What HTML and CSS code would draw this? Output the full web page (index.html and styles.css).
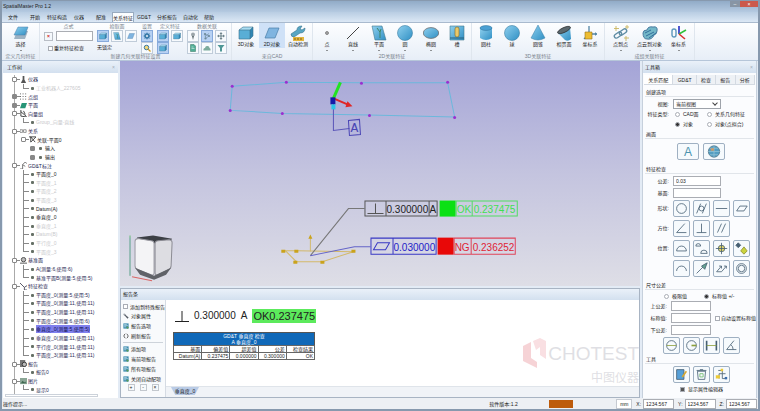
FILE: index.html
```
<!DOCTYPE html>
<html lang="zh-CN">

<head>
  <meta charset="UTF-8">
  <title>SpatialMaster Pro 1.2</title>
  <link rel="stylesheet" href="styles.css">
</head>

<body>
  <svg class="defs" aria-hidden="true">
    <defs>
      <linearGradient id="blue" x1="0" y1="0" x2="1" y2="1">
        <stop offset="0" stop-color="#8fd0ee" />
        <stop offset="1" stop-color="#2f8fc4" />
      </linearGradient>
    </defs>
    <symbol id="plane" viewBox="0 0 16 16"><path d="M4 6h11l-3 8H1z" fill="#9db3c4" /><path d="M5 2h10l-3 8H1z" fill="url(#blue)" stroke="#4a7ea8" stroke-width=".5" /></symbol>
    <symbol id="sheet" viewBox="0 0 16 16"><path d="M5 3h10l-4 10H1z" fill="#7fb4e0" stroke="#4a7ea8" stroke-width=".7" /></symbol>
    <symbol id="cube" viewBox="0 0 16 16"><path d="M1 5l4-3h10l-3 3z" fill="#a9ddf2" /><path d="M1 5h11v9H1z" fill="#59aed6" /><path d="M12 5l3-3v9l-3 3z" fill="#2f86b4" /><path d="M1 5l4-3h10v9l-3 3H1zh11v9M12 5l3-3" fill="none" stroke="#3b6e8c" stroke-width=".6" /></symbol>
    <symbol id="wrench" viewBox="0 0 16 16"><path d="M1 9l6-4q0-4 5-4l-2 3 2 1 3-2q0 5-5 5l-6 4q-3 0-3-3z" fill="#57a6c4" stroke="#33708c" stroke-width=".6" /><path d="M3 12h11v4H3z" fill="#e3b53c" /><path d="M4 14h9" stroke="#7c5f16" stroke-dasharray="2 1" /></symbol>
    <symbol id="spanner" viewBox="0 0 16 16"><path d="M2 1q-2 5 3 6l7 8 3-3-8-7q0-4-5-4l3 3-1 1z" fill="#555c66" /></symbol>
    <symbol id="dot" viewBox="0 0 16 16"><circle cx="8" cy="8" r="1.5" fill="#aaa" stroke="#555" stroke-width=".6" /></symbol>
    <symbol id="line" viewBox="0 0 16 16"><path d="M2 14L14 2" stroke="#444" /></symbol>
    <symbol id="face" viewBox="0 0 16 16"><path d="M1 1h10l4 14H4z" fill="url(#blue)" stroke="#44788f" stroke-width=".6" /><path d="M6 3l3 4 1-3M9 7v6" stroke="#3e8566" fill="none" /></symbol>
    <symbol id="circle" viewBox="0 0 16 16"><circle cx="8" cy="8" r="7.5" fill="url(#blue)" stroke="#3d7fa4" stroke-width=".6" /></symbol>
    <symbol id="ellipse" viewBox="0 0 16 16"><ellipse cx="8" cy="8" rx="7.7" ry="5.4" fill="url(#blue)" stroke="#6b6f72" stroke-width=".8" /></symbol>
    <symbol id="slot" viewBox="0 0 16 16"><path d="M1 1h14v14H1z" fill="url(#blue)" stroke="#44788f" stroke-width=".6" /><rect x="6" y="2" width="4" height="10" rx="2" fill="#e8c96b" stroke="#8a6a1d" stroke-width=".6" /><path d="M1 13h14" stroke="#27607d" /></symbol>
    <symbol id="cylinder" viewBox="0 0 16 16"><path d="M2 3v10q6 4 12 0V3z" fill="url(#blue)" /><ellipse cx="8" cy="3" rx="6" ry="2.400" fill="#4ba0d3" stroke="#2d6c94" stroke-width=".5" /></symbol>
    <symbol id="cone" viewBox="0 0 16 16"><path d="M8 0l7 13q-7 4-14 0z" fill="url(#blue)" stroke="#3d7fa4" stroke-width=".5" /></symbol>
    <symbol id="cut" viewBox="0 0 16 16"><path d="M2 8l12-6 1 12q-3 3-6 1z" fill="url(#blue)" /><ellipse cx="8" cy="5" rx="7" ry="2.4" transform="rotate(-25 8 5)" fill="#5b686e" stroke="#222" stroke-width=".6" /></symbol>
    <symbol id="axes" viewBox="0 0 16 16"><path d="M7 1v8h8M7 9l-5 5" fill="none" stroke="#5486a5" stroke-width="1.3" /><path d="M3 7h7v7H3z" fill="#edbd32" stroke="#98721a" stroke-width=".6" /><path d="M15 9l-2-2v4z" fill="#5486a5" /></symbol>
    <symbol id="link" viewBox="0 0 16 16"><rect x="1" y="8" width="8" height="4" rx="2" transform="rotate(-35 5 10)" fill="none" stroke="#5e8ca3" stroke-width="1.4" /><rect x="6" y="5" width="8" height="4" rx="2" transform="rotate(-35 10 7)" fill="none" stroke="#5e8ca3" stroke-width="1.4" /><path d="M3 1v5M1 3.500h5M14 0v4M12 2h4M13 11v5M11 13h5" stroke="#c9b660" stroke-width=".9" /></symbol>
    <symbol id="cloud" viewBox="0 0 16 16"><path d="M1 8q0-3 4-3 1-4 6-3 5-1 4 4 0 3-3 4-2 5-7 4-4 0-4-6z" fill="#73b7c8" stroke="#4a7ba0" /><path d="M3 8l6-3M4 11l8-4M7 13l7-5" stroke="#336f9c" /></symbol>
    <symbol id="csys" viewBox="0 0 16 16"><rect x="1" y="4" width="4" height="8" rx="2" fill="none" stroke="#5c97bb" stroke-width="1.4" /><path d="M8 9V1" stroke="#232bc4" stroke-width="1.600" /><path d="M8 9l7-4" stroke="#2fc13a" stroke-width="1.600" /><path d="M8 9l6 5" stroke="#d82f2f" stroke-width="1.600" /></symbol>
    <symbol id="gear" viewBox="0 0 16 16"><circle cx="8" cy="8" r="4" fill="none" stroke="#3477a6" stroke-width="3" /><path d="M8 1v14M1 8h14M3 3l10 10M13 3L3 13" stroke="#3477a6" stroke-width="1.500" /><circle cx="8" cy="8" r="2" fill="#e5edf7" /></symbol>
    <symbol id="search" viewBox="0 0 16 16"><circle cx="7" cy="7" r="4.500" fill="#f3d778" stroke="#3477a6" stroke-width="2" /><path d="M10 10l5 5" stroke="#d09a23" stroke-width="2.500" /></symbol>
    <symbol id="pin" viewBox="0 0 16 16"><circle cx="8" cy="5" r="4" fill="#9ba5aa" /><path d="M6 8h4l-2 8z" fill="#5f6b70" /></symbol>
    <symbol id="nodes" viewBox="0 0 16 16"><path d="M4 4l8 4-7 5M4 4l1 9M12 3l-8 6" stroke="#59768c" fill="none" /><circle cx="4" cy="4" r="2.200" fill="#6d8a99" /><circle cx="12" cy="8" r="2.200" fill="#6d8a99" /><circle cx="5" cy="13" r="2.200" fill="#6d8a99" /></symbol>
    <symbol id="move" viewBox="0 0 16 16"><path d="M8 0l3 4H9v3h3V5l4 3-4 3V9H9v3h2l-3 4-3-4h2V9H4v2L0 8l4-3v2h3V4H5z" fill="#6a8088" /></symbol>
    <symbol id="doc" viewBox="0 0 16 16"><path d="M3 1h7l3 3v11H3z" fill="#4fae96" stroke="#35725f" /><path d="M5 6h4M5 9h6" stroke="#fff" /></symbol>
    <symbol id="smallcloud" viewBox="0 0 16 16"><path d="M1 13q-1-5 3-5 1-5 5-4 4 0 4 4 3 0 2 5z" fill="#7cab9d" /></symbol>
    <symbol id="funnel" viewBox="0 0 16 16"><path d="M1 2h14l-5 6v7H6V8z" fill="#4f9796" /></symbol>
    <symbol id="pic" viewBox="0 0 16 16"><path d="M1 1h14v14H1z" fill="#418db0" /><path d="M3 4h7M3 7h10M3 10h5" stroke="#d8eef5" stroke-width="1.500" /><circle cx="12" cy="12" r="3" fill="#5c9a58" /></symbol>
    <symbol id="refresh" viewBox="0 0 16 16"><path d="M6 2Q1 5 3 10l3 4M10 14q5-3 3-8l-3-4" fill="none" stroke="#333" stroke-width="2" /></symbol>
  </svg>

  <div class="app">
    <header class="titlebar">
      <span>SpatialMaster Pro 1.2</span>
      <div class="window-buttons"><button aria-label="最小化">–</button><button class="close" aria-label="关闭">×</button></div>
    </header>

    <nav class="menu">
      <button class="wide">文件</button><button class="wide">开始</button><button class="tight">特征构造</button><button class="wide">仪器</button><button class="wide">配准</button><button class="active">关系特征</button><button>GD&amp;T</button><button>分析报告</button><button>自动化</button><button>帮助</button>
    </nav>

    <div class="ribbon">
      <section class="group define">
        <div class="tools"><button class="tool"><svg><use href="#plane" /></svg>选择<i></i></button></div>
        <h2>定义几何特征</h2>
      </section>
      <section class="group settings">
        <div class="tools">
          <div class="sub point">
            <h3>点式</h3>
            <div class="name-row"><button class="clear" aria-label="清除">×</button><input type="text" aria-label="名称"></div>
            <label><input type="checkbox">重复特征检查</label>
          </div>
          <div class="sub pick">
            <h3>拾取面</h3>
            <div class="mini three"><button class="on"><svg><use href="#cube" /></svg></button><button><svg><use href="#face" /></svg></button><button><svg><use href="#sheet" /></svg></button></div>
            <span>无锁定</span>
          </div>
          <div class="sub">
            <h3>设置</h3>
            <div class="mini"><button class="on"><svg><use href="#gear" /></svg></button><button><svg><use href="#search" /></svg></button></div>
          </div>
          <div class="sub">
            <h3>定义特征</h3>
            <div class="mini two"><button class="on"><svg><use href="#cube" /></svg></button><button><svg><use href="#cube" /></svg></button><button class="on"><svg><use href="#cube" /></svg></button></div>
          </div>
          <div class="sub">
            <h3>数据关联</h3>
            <div class="mini three"><button><svg><use href="#pin" /></svg></button><button class="on"><svg><use href="#nodes" /></svg></button><button><svg><use href="#move" /></svg></button><button><svg><use href="#doc" /></svg></button><button><svg><use href="#smallcloud" /></svg></button><button><svg><use href="#funnel" /></svg></button></div>
          </div>
        </div>
        <h2>新建几何关联特征设置</h2>
      </section>
      <section class="group">
        <div class="tools">
          <button class="tool"><svg><use href="#cube" /></svg>3D对象</button>
          <button class="tool on"><svg><use href="#sheet" /></svg>2D对象</button>
          <button class="tool"><svg><use href="#wrench" /></svg>自动检测</button>
        </div>
        <h2>来自CAD</h2>
      </section>
      <section class="group">
        <div class="tools">
          <button class="tool"><svg><use href="#dot" /></svg>点<i></i></button>
          <button class="tool"><svg><use href="#line" /></svg>直线<i></i></button>
          <button class="tool"><svg><use href="#face" /></svg>平面<i></i></button>
          <button class="tool"><svg><use href="#circle" /></svg>圆<i></i></button>
          <button class="tool"><svg><use href="#ellipse" /></svg>椭圆<i></i></button>
          <button class="tool"><svg><use href="#slot" /></svg>槽</button>
        </div>
        <h2>2D关联特征</h2>
      </section>
      <section class="group">
        <div class="tools">
          <button class="tool"><svg><use href="#cylinder" /></svg>圆柱</button>
          <button class="tool"><svg><use href="#circle" /></svg>球</button>
          <button class="tool"><svg><use href="#cone" /></svg>圆锥</button>
          <button class="tool"><svg><use href="#cut" /></svg>相贯面</button>
          <button class="tool"><svg><use href="#axes" /></svg>坐标系</button>
        </div>
        <h2>3D关联特征</h2>
      </section>
      <section class="group spaced">
        <div class="tools">
          <button class="tool"><svg><use href="#link" /></svg>点到点<i></i></button>
          <button class="tool"><svg><use href="#cloud" /></svg>点云到对象<i></i></button>
          <button class="tool"><svg><use href="#csys" /></svg>坐标系<i></i></button>
        </div>
        <h2>成组关联特征</h2>
      </section>
    </div>

    <main class="workspace">
      <aside class="tree-panel">
        <h2 class="panel-title">工作树<span>×</span></h2>
        <ul class="tree">
          <li class="root"><svg viewBox="0 0 8 8"><path d="M3 0h2v4l2 4H1l2-4z" fill="#555" /></svg>仪器</li>
          <li class="leaf last off">工业机器人_227605</li>
          <li class="root shut"><svg viewBox="0 0 8 8"><path d="M0 1h8M0 4h8M0 7h8" stroke="#444" stroke-dasharray="1 2" /></svg>点组</li>
          <li class="root shut"><svg viewBox="0 0 8 8"><path d="M2 1h6L6 7H0z" fill="#279577" /></svg>平面</li>
          <li class="root"><svg viewBox="0 0 8 8"><path d="M1 0v7l7 1M1 2l6 5M4 1l2 4" fill="none" stroke="#333" /></svg>向量组</li>
          <li class="leaf last off">Group_向量-直线</li>
          <li class="root"><svg viewBox="0 0 8 8"><path d="M0 2h3v3H0zM4 2h3v3H4z" fill="none" stroke="#888" /></svg>关系</li>
          <li class="branch"><svg viewBox="0 0 8 8"><path d="M0 1h8L2 7V1l5 6" fill="none" stroke="#333" /></svg>关联-平面0</li>
          <li class="deep">输入</li>
          <li class="deep">输出</li>
          <li class="root"><svg viewBox="0 0 8 8"><path d="M0 8h3V3l3-3 2 2M3 3l3 2" fill="none" stroke="#666" /></svg>GD&amp;T标注</li>
          <li class="leaf">平面度_0</li>
          <li class="leaf off">平面度_1</li>
          <li class="leaf off">平面度_2</li>
          <li class="leaf off">平面度_3</li>
          <li class="leaf">Datum(A)</li>
          <li class="leaf">垂直度_0</li>
          <li class="leaf off">垂直度_1</li>
          <li class="leaf off">Datum(B)</li>
          <li class="leaf off">平行度_0</li>
          <li class="leaf last off">平面度_3</li>
          <li class="root"><svg viewBox="0 0 8 8"><circle cx="4" cy="3" r="2.500" fill="#bbb" stroke="#444" /><path d="M0 7h8" stroke="#444" /></svg>基准面</li>
          <li class="leaf used">A(测量:6,使用:6)</li>
          <li class="leaf last used">基准平面B(测量:5,使用:5)</li>
          <li class="root"><svg viewBox="0 0 8 8"><path d="M0 0l5 5v3h3M5 5l3-2" fill="none" stroke="#445" /></svg>特征检查</li>
          <li class="leaf used">平面度_0(测量:5,使用:5)</li>
          <li class="leaf used">平面度_0(测量:11,使用:11)</li>
          <li class="leaf used">平面度_1(测量:11,使用:11)</li>
          <li class="leaf used">平面度_2(测量:6,使用:6)</li>
          <li class="leaf used selected"><span>垂直度_0(测量:5,使用:5)</span></li>
          <li class="leaf used">垂直度_0(测量:11,使用:11)</li>
          <li class="leaf used">平行度_0(测量:11,使用:11)</li>
          <li class="leaf last used">平面度_3(测量:11,使用:11)</li>
          <li class="root"><svg viewBox="0 0 8 8"><path d="M0 0h6v8H0z" fill="#777" /><circle cx="5" cy="5" r="2.500" fill="#bbb" stroke="#333" /></svg>报告</li>
          <li class="leaf last used">报告0</li>
          <li class="root"><svg viewBox="0 0 8 8"><path d="M0 0h8v7H0z" fill="#8ba696" /><path d="M1 6l2-3 2 2 1-1 1 2" fill="#3e6950" /></svg>图片</li>
          <li class="leaf last used">显示0</li>
        </ul>
        <div class="hscroll"></div>
      </aside>

      <div class="center">
        <div class="view">
          <svg viewBox="121 62 519 224">
            <path d="M233 87l54-4 75 0.500h86l7 34-85-2-87-1.500-52-3z" fill="none" stroke="#6cb8dc" />
            <g fill="#9a2fd0">
              <circle cx="233" cy="87" r="1.500" /><circle cx="287" cy="83" r="1.500" /><circle cx="362" cy="84" r="1.500" /><circle cx="448" cy="83" r="1.500" />
              <circle cx="231" cy="111" r="1.500" /><circle cx="283" cy="114" r="1.500" /><circle cx="370" cy="116" r="1.500" /><circle cx="455" cy="118" r="1.500" />
            </g>
            <path d="M334 100v31l16-2" fill="none" stroke="#5a55b8" />
            <path d="M334 99l7-16" stroke="#22e322" stroke-width="3" />
            <path d="M334 99l14 6" stroke="#e02626" stroke-width="2" />
            <path d="M346 108l2-6 5 5z" fill="#e02626" />
            <path d="M331 98h5v7h-5z" fill="#161aa8" />
            <path d="M332 105h4v5h-4z" fill="#2cc4e6" />
            <path d="M349 121l11-1 1 15-11 1z" fill="none" stroke="#4a45b5" />
            <text class="datum" x="351" y="133">A</text>

            <path d="M284 251h14l56 1-31 10h-26l-11-11M311 238v14" fill="none" stroke="#d3b96b" />
            <g fill="#caa31c"><path d="M309 239l2-4 2 4zM282 250h4v3h-4zM295 250h4v3h-4zM352 250h4v3h-4zM294 261h4v3h-4zM321 261h4v3h-4z" /></g>
            <path d="M311 256l38-47h16" fill="none" stroke="#777" />
            <path d="M311 256l44-9h16" fill="none" stroke="#6464c8" />

            <g fill="none" stroke="#555">
              <path d="M365.500 201.500h72v15h-72zM386.500 201.500v15M429.500 201.500v15M368 214h16M376 204v10" />
            </g>
            <path d="M440 201h16v16h-16z" fill="#0be014" />
            <path d="M456.500 201.500h61v15h-61zM472.500 201.500v15" fill="none" stroke="#51dc63" />
            <text class="callout" x="387" y="213">0.300000</text>
            <text class="callout" x="430" y="213">A</text>
            <text class="callout ok" x="457" y="213">OK</text>
            <text class="callout ok" x="474" y="213">0.237475</text>

            <path d="M371.500 238.500h65v16h-65zM393.500 238.500v16M374 250l4-7h12l-4 7z" fill="none" stroke="#3838c4" />
            <path d="M438 238h16v17h-16z" fill="#e80808" />
            <path d="M454.500 238.500h61v16h-61zM471.500 238.500v16" fill="none" stroke="#e0455a" />
            <text class="callout info" x="394" y="251">0.030000</text>
            <text class="callout ng" x="455" y="251">NG</text>
            <text class="callout ng" x="473" y="251">0.236252</text>

            <path d="M131 236v40" stroke="#65be71" /><path d="M133 277l20 4" stroke="#d96565" /><path d="M131 276v-38" stroke="#8490d8" stroke-width=".5" />
            <path d="M138 238l16-2 19 3-4 5-31-1z" fill="#3c3f45" />
            <path d="M136 242q0-3 3-3l13 2q3 0 3 3v29q0 3-3 2l-13-5q-3-1-3-4z" fill="#f4f4f6" stroke="#9a9aa2" />
            <path d="M156 244q0-3 3-3l11-1q3 0 3 3l-1 23q0 3-3 4l-10 5q-3 1-3-2z" fill="#dddde2" stroke="#8c8c94" />
            <path d="M136 268l19 8 17-8-5 7-12 5-14-5z" fill="#606268" />
          </svg>
        </div>

        <section class="report">
          <h2 class="panel-title">报告条</h2>
          <div class="report-main">
            <div class="report-menu">
              <label><input type="checkbox">添加到特殊报告</label>
              <button><svg><use href="#spanner" /></svg>对象属性</button>
              <button><svg><use href="#pic" /></svg>报告选项</button>
              <button><svg><use href="#refresh" /></svg>刷新报告</button>
              <hr>
              <button><svg><use href="#pic" /></svg>添加项</button>
              <button><svg><use href="#pic" /></svg>当前项报告</button>
              <button><svg><use href="#pic" /></svg>所有项报告</button>
              <button><svg><use href="#pic" /></svg>关闭自动配项</button>
              <div class="steps"><button>+</button><button>-</button><button>×</button></div>
            </div>
            <div class="report-page">
              <div class="sheet">
                <p class="result"><svg viewBox="0 0 14 11"><path d="M0 10.500h14M7 0v10" stroke="#222" /></svg><span>0.300000</span><span>A</span><strong>OK0.237475</strong></p>
                <table>
                  <caption>GD&amp;T 垂直度 检查<br>A 垂直度_0</caption>
                  <tr><th>基面</th><th>偏差值</th><th>超差值</th><th>公差</th><th>检查结果</th></tr>
                  <tr><td>Datum(A)</td><td>0.237475</td><td>0.000000</td><td>0.300000</td><td>OK</td></tr>
                </table>
                <div class="watermark">
                  <svg viewBox="0 0 24 32"><path d="M0 8l8-4v16l6 4v6L0 23z" fill="#f6d3d6" /><path d="M10 3l7-3 6 3v18l-6-4V9l-4 3z" fill="#f9dfe2" /></svg>
                  <b>CHOTEST</b>
                  <span>中图仪器</span>
                </div>
              </div>
              <div class="page-tabs"><button>垂直度_0</button></div>
            </div>
          </div>
        </section>
      </div>

      <aside class="toolbox">
        <h2 class="panel-title">工具箱<span>×</span></h2>
        <nav class="tool-tabs"><button class="active">关系匹配</button><button>GD&amp;T</button><button>检查</button><button>报告</button><button>分析</button></nav>
        <h3>创建选项</h3>
        <div class="row"><label for="view">视图:</label><div class="select"><select id="view"><option>当前视图</option></select></div></div>
        <div class="row"><span>特征类型:</span><div class="radios"><label><input type="radio" name="type">CAD面</label><label><input type="radio" name="type">关系几何特征</label></div></div>
        <div class="row"><span></span><div class="radios"><label><input type="radio" name="type" checked>对象</label><label><input type="radio" name="type">对象(点拟合)</label></div></div>
        <h3>画面</h3>
        <div class="buttons big">
          <button class="letter">A</button>
          <button aria-label="球面"><svg viewBox="0 0 16 16"><circle cx="8" cy="8" r="7" fill="#549ec2" stroke="#56778a" /><path d="M1 8h14M8 1v14M3 4h10M3 12h10" stroke="#8fc0d4" /><path d="M4 4h4v3H4z" fill="#ce9a68" stroke="none" /></svg></button>
        </div>
        <h3>特征检查</h3>
        <div class="row field"><label for="tol">公差:</label><input id="tol" type="text" value="0.03"></div>
        <div class="row field"><label for="base">基面:</label><input id="base" type="text"></div>
        <div class="row symbols"><span>形状:</span>
          <div class="buttons">
            <button aria-label="圆度"><svg viewBox="0 0 16 16"><circle cx="8" cy="8" r="6" /></svg></button>
            <button aria-label="圆柱度"><svg viewBox="0 0 16 16"><circle cx="8" cy="8" r="3" /><path d="M2 14L7 2M9 14l5-12" /></svg></button>
            <button aria-label="直线度"><svg viewBox="0 0 16 16"><path d="M1 8h14" /></svg></button>
            <button aria-label="平面度"><svg viewBox="0 0 16 16"><path d="M2 11l4-6h9l-4 6z" /></svg></button>
          </div>
        </div>
        <div class="row symbols"><span>方位:</span>
          <div class="buttons">
            <button aria-label="倾斜度"><svg viewBox="0 0 16 16"><path d="M12 2L2 13h12" /></svg></button>
            <button aria-label="垂直度"><svg viewBox="0 0 16 16"><path d="M2 13h12M8 2v11" /></svg></button>
            <button aria-label="平行度"><svg viewBox="0 0 16 16"><path d="M3 13L8 2M8 13l5-11" /></svg></button>
          </div>
        </div>
        <div class="row symbols"><span>位置:</span>
          <div class="buttons">
            <button aria-label="面轮廓度"><svg viewBox="0 0 16 16"><path d="M2 11a6 6 0 0 1 12 0z" /></svg></button>
            <button aria-label="复合轮廓度"><svg viewBox="0 0 16 16"><path d="M1 5a3 3 0 0 1 6 0zM7 14a4 4 0 0 1 8 0z" /></svg></button>
            <button aria-label="位置度"><svg viewBox="0 0 16 16"><circle cx="8" cy="8" r="4" fill="#e2d66a" /><path d="M8 1v14M1 8h14" /></svg></button>
            <button aria-label="复合位置度"><svg viewBox="0 0 16 16"><path d="M4 1l3 3-3 3-3-3z" fill="#465f72" /><path d="M11 6l4 5-4 4-4-4z" fill="#cbd33d" stroke="#8a8c2c" /></svg></button>
            <button aria-label="线轮廓度"><svg viewBox="0 0 16 16"><path d="M2 11a6 6 0 0 1 12 0" /></svg></button>
            <button aria-label="圆跳动"><svg viewBox="0 0 16 16"><path d="M2 14L12 4" /><path d="M15 1l-7 4 4 4z" fill="#63a391" /></svg></button>
            <button aria-label="全跳动"><svg viewBox="0 0 16 16"><path d="M2 12h6M2 12l6-7M8 12l6-7M5 5h3v3M11 5h3v3" /></svg></button>
            <button aria-label="同心度"><svg viewBox="0 0 16 16"><circle cx="8" cy="8" r="6" /><circle cx="8" cy="8" r="4" /></svg></button>
          </div>
        </div>
        <h3>尺寸公差</h3>
        <div class="radios modes"><label><input type="radio" name="mode">极限值</label><label><input type="radio" name="mode" checked>标称值 +/-</label></div>
        <div class="row dims"><label for="up">上公差:</label><input id="up" type="text"></div>
        <div class="row dims"><label for="nom">标称值:</label><input id="nom" type="text"><label class="check"><input type="checkbox">自动设置标称值</label></div>
        <div class="row dims"><label for="low">下公差:</label><input id="low" type="text"></div>
        <div class="buttons sizes">
          <button aria-label="直径"><svg viewBox="0 0 16 16"><circle cx="8" cy="8" r="6" /><path d="M2 8h12" stroke="#8ca03c" /></svg></button>
          <button aria-label="半径"><svg viewBox="0 0 16 16"><circle cx="8" cy="8" r="6" /><path d="M8 8h6" stroke="#8ca03c" stroke-width="2" /></svg></button>
          <button aria-label="距离"><svg viewBox="0 0 16 16"><path d="M2 2v12M14 2v12" stroke-width="2" /><path d="M2 8h12" stroke="#8ca03c" /></svg></button>
          <button aria-label="角度"><svg viewBox="0 0 16 16"><path d="M11 2L2 13h12M7 7q3 2 3 6" /></svg></button>
        </div>
        <h3>工具</h3>
        <div class="buttons edit">
          <button aria-label="编辑"><svg viewBox="0 0 16 16"><path d="M2 2h9v12H2z" fill="#559fd8" /><path d="M14 4l-5 7" stroke="#d7a932" stroke-width="2" /></svg></button>
          <button aria-label="删除"><svg viewBox="0 0 16 16"><path d="M3 4h10l-1 10H4zM2 3h12M6 2h4" /><path d="M6 7h4v4H6z" stroke="#6bb96a" /></svg></button>
          <button aria-label="结构"><svg viewBox="0 0 16 16"><path d="M4 3h5v4h4M5 13V7h4M9 7v6h4" /><path d="M1 9h5v4H1zM7 1h3v3H7z" fill="#edca36" stroke="none" /><path d="M12 11h3v3h-3z" fill="#3b6eb0" stroke="none" /></svg></button>
        </div>
        <label class="check show"><input type="checkbox" checked>显示属性编辑器</label>
      </aside>
    </main>

    <footer class="status">
      <span class="hint">操作提示...</span>
      <span class="version">软件版本:1.2</span>
      <span class="progress"></span>
      <span class="unit">mm</span>
      <label>X:<input type="text" value="1234.567"></label>
      <label>Y:<input type="text" value="1234.567"></label>
      <label>Z:<input type="text" value="1234.567"></label>
    </footer>
  </div>
</body>

</html>
```
FILE: styles.css
```
*,
*::before,
*::after {
  box-sizing: border-box;
}

body {
  margin: 0;
  font: 5px/8px "Liberation Sans", "Noto Sans CJK SC", sans-serif;
  color: #222;
}

button,
input,
select {
  font: inherit;
  color: inherit;
  margin: 0;
  padding: 0;
  border: 0;
  background: none;
  border-radius: 0;
}

h2,
h3,
p,
ul {
  margin: 0;
  padding: 0;
  font-size: inherit;
  font-weight: normal;
  list-style: none;
}

input[type="text"] {
  min-width: 0;
  height: 10px;
  padding: 0 2px;
  border: 1px solid #aaadb3;
  background: #fff;
}

input[type="checkbox"],
input[type="radio"] {
  appearance: none;
  flex: none;
  width: 5px;
  height: 5px;
  border: 1px solid #a9adb5;
  background: #fff;
}

input[type="radio"] {
  border-radius: 50%;
}

input[type="radio"]:checked {
  background: #333;
}

.defs {
  position: absolute;
  width: 0;
  height: 0;
}

.app {
  display: flex;
  flex-direction: column;
  height: 100vh;
  border: solid #8799ae;
  border-width: 1px 2px 2px;
  background: #e3ebf5;
  overflow: hidden;
}

.titlebar {
  display: flex;
  justify-content: space-between;
  flex: none;
  height: 11px;
  padding-left: 1px;
  line-height: 11px;
  background: linear-gradient(#91abc7, #b5cae1);
}

.window-buttons {
  display: flex;
  height: 6px;
}

.window-buttons button {
  width: 10px;
  line-height: 5px;
  color: #fff;
  background: #8895a4;
}

.window-buttons .close {
  width: 18px;
  background: #cb594c;
}

.menu {
  display: flex;
  flex: none;
  height: 10px;
  background: linear-gradient(#b9cde3, #dce8f5);
}

.menu button {
  padding: 0 3px;
  white-space: nowrap;
}

.menu .wide {
  padding: 0 6px;
}

.menu .tight {
  padding: 0 1px;
}

.menu .active {
  border: 1px solid #98aabf;
  border-bottom: 0;
  padding: 0;
  background: #fbfdff;
}

/* ribbon */

.ribbon {
  display: flex;
  flex: none;
  height: 39px;
  border-top: 1px solid #a9bace;
  border-bottom: 1px solid #b6c6d9;
  background: linear-gradient(#fdfeff, #e7eef7);
}

.group {
  display: flex;
  flex-direction: column;
  padding: 0 1px;
  border-right: 1px solid #dfe6ee;
}

.group h2 {
  line-height: 7px;
  color: #777f8a;
  text-align: center;
  white-space: nowrap;
}

.tools {
  display: flex;
  flex: 1;
  min-height: 0;
}

.tool {
  display: flex;
  flex-direction: column;
  align-items: center;
  width: 26px;
  padding-top: 2px;
  line-height: 7px;
  white-space: nowrap;
}

.tool svg {
  width: 16px;
  height: 16px;
}

.tool i {
  margin-top: 2px;
  border: 1px solid transparent;
  border-top-color: #333;
}

.tool.on {
  height: 25px;
  background: #cfe1f7;
}

.define {
  width: 38px;
  align-items: center;
}

.settings {
  width: 192px;
}

.spaced .tool {
  width: 29px;
}

.settings .tools {
  gap: 4px;
  padding-left: 3px;
}

.sub h3 {
  line-height: 7px;
  color: #777f8a;
  text-align: center;
}

.sub.point {
  width: 49px;
}

.name-row {
  display: flex;
  gap: 3px;
  align-items: center;
  padding-top: 1px;
}

.name-row input {
  flex: 1;
}

.clear {
  width: 9px;
  height: 9px;
  border: 1px solid #b9bec6;
  line-height: 6px;
  color: #d11a1a;
  font-weight: bold;
}

.point label {
  display: flex;
  align-items: center;
  gap: 1px;
  padding: 3px 0 0 4px;
  white-space: nowrap;
}

.pick span {
  line-height: 11px;
}

.mini {
  display: grid;
  gap: 0 2px;
  grid-template-columns: 12px;
  justify-content: center;
}

.mini.two {
  grid-template-columns: 12px 12px;
}

.mini.three {
  grid-template-columns: 12px 12px 12px;
}

.mini button {
  display: flex;
  height: 12px;
  padding: 1px;
  border: 1px solid #c0ccd9;
  background: #f7fafd;
}

.mini .on {
  border-color: #87aadb;
  background: #b7d1f3;
}

.mini svg {
  width: 100%;
  height: 100%;
}

/* panels */

.workspace {
  display: flex;
  flex: 1;
  gap: 2px;
  min-height: 0;
  padding: 0 1px;
}

.panel-title {
  display: flex;
  justify-content: space-between;
  flex: none;
  height: 12px;
  padding: 0 3px 0 4px;
  line-height: 12px;
  background: linear-gradient(#eaf1f9, #d3e0ef);
}

.panel-title span {
  color: #a3adba;
}

.tree-panel {
  display: flex;
  flex-direction: column;
  width: 115px;
  background: #fff;
}

.tree {
  display: grid;
  grid-auto-rows: 1fr;
  flex: 1;
  min-height: 0;
  margin-top: 2px;
  padding-left: 11px;
  overflow: hidden;
  background: linear-gradient(#aaa, #aaa) 11px 0 / 1px 100% no-repeat;
}

.tree li {
  position: relative;
  display: flex;
  align-items: center;
  min-height: 0;
  line-height: 8px;
  white-space: nowrap;
}

.tree svg {
  width: 7px;
  height: 7px;
  margin-right: 1px;
}

.tree .root {
  padding-left: 6px;
  color: #252550;
}

.root::before,
.branch::before,
.deep::before {
  content: "";
  position: absolute;
  top: 2px;
  left: -2px;
  width: 5px;
  height: 5px;
  border: 1px solid #888;
  border-radius: 1px;
  background: #fff;
}

.root.shut::before,
.deep::before {
  background: #888;
}

.root::after,
.branch::after {
  content: "";
  position: absolute;
  top: 4px;
  left: 3px;
  width: 3px;
  height: 1px;
  background: #888;
}

.tree .branch {
  padding-left: 15px;
}

.branch::before {
  left: 7px;
}

.branch::after {
  left: 12px;
}

.tree .deep {
  padding-left: 31px;
}

.deep::before {
  left: 16px;
}

.deep::after,
.leaf::before {
  content: "";
  position: absolute;
  top: 3px;
  left: 17px;
  width: 3px;
  height: 3px;
  background: #667066;
  border-radius: 1px;
}

.deep::after {
  left: 25px;
}

.tree .leaf {
  padding-left: 22px;
}

.leaf::after {
  content: "";
  position: absolute;
  top: 0;
  bottom: 0;
  left: 9px;
  width: 6px;
  border-left: 1px solid #888;
  background: linear-gradient(#888, #888) 0 4px / 5px 1px no-repeat;
}

.leaf.last::after {
  bottom: auto;
  height: 5px;
}

.tree .off {
  color: #c9c9cc;
}

.used {
  color: #2b2b55;
}

.selected span {
  background: #8080ee;
  color: #11114f;
}

.hscroll {
  flex: none;
  height: 3px;
  margin: 0 20px 1px 2px;
  border: 1px solid #ccd2da;
}

.center {
  display: flex;
  flex: 1;
  flex-direction: column;
  gap: 2px;
  min-width: 0;
}

.view {
  flex: 1;
  min-height: 0;
  background: linear-gradient(#a4a4d7, #c4c4df 50%, #dedee6);
}

.view svg {
  display: block;
  width: 100%;
  height: 100%;
}

.callout {
  font-size: 10px;
  fill: #222;
}

.ok {
  fill: #3fe052;
}

.ng {
  fill: #e01f35;
}

.info {
  fill: #2222c8;
}

.datum {
  font: 13px "Liberation Mono", monospace;
  fill: #4a45b5;
}

/* report */

.report {
  display: flex;
  flex-direction: column;
  flex: none;
  height: 110px;
  border: 1px solid #a8b4c3;
  background: #fff;
}

.report .panel-title {
  height: 11px;
  padding-left: 2px;
  line-height: 11px;
}

.report-main {
  display: flex;
  flex: 1;
  min-height: 0;
}

.report-menu {
  width: 45px;
  padding: 2px;
  border-right: 1px solid #d5dbe3;
  background: #f8fafc;
}

.report-menu > label,
.report-menu > button {
  display: flex;
  align-items: center;
  gap: 2px;
  height: 10px;
  line-height: 8px;
  white-space: nowrap;
}

.report-menu > label {
  height: 9px;
}

.report-menu svg {
  width: 6px;
  height: 6px;
}

.report-menu hr {
  margin: 1px 0;
  border: 0;
  border-top: 1px solid #cdd3da;
}

.steps {
  display: flex;
  justify-content: center;
  gap: 5px;
}

.steps button {
  width: 7px;
  height: 7px;
  border: 1px solid #c3c8ce;
  line-height: 5px;
}

.report-page {
  display: flex;
  flex: 1;
  flex-direction: column;
  min-width: 0;
}

.sheet {
  position: relative;
  flex: 1;
  padding: 9px 7px 0;
}

.result {
  display: flex;
  align-items: center;
  gap: 5px;
  height: 14px;
  padding-left: 2px;
  font-size: 10px;
  line-height: 14px;
}

.result svg {
  width: 14px;
  height: 11px;
}

.result strong {
  padding: 0 1px;
  font-size: 11px;
  font-weight: normal;
  background: #5cea5c;
}

.sheet table {
  width: 142px;
  margin-top: 9px;
  border-collapse: collapse;
  table-layout: fixed;
}

.sheet caption {
  border: 1px solid #555;
  border-bottom: 0;
  color: #fff;
  line-height: 6px;
  background: #0f68b8;
}

.sheet th,
.sheet td {
  height: 7px;
  padding: 0 1px;
  border: 1px solid #666;
  font-weight: normal;
  line-height: 6px;
  text-align: right;
  white-space: nowrap;
}

.watermark {
  position: absolute;
  right: 0;
  bottom: 0;
  display: grid;
  grid-template-columns: 24px auto;
  column-gap: 1px;
  align-items: center;
  color: #dfdfe4;
}

.watermark svg {
  width: 24px;
  height: 32px;
}

.watermark b {
  font-size: 19px;
  font-weight: normal;
  line-height: 24px;
}

.watermark span {
  grid-column: 2;
  font-size: 12px;
  line-height: 16px;
  text-align: right;
}

.page-tabs {
  flex: none;
  height: 11px;
  padding-left: 5px;
  border-top: 1px solid #dfe4ea;
  background: #f0f3f7;
}

.page-tabs button {
  display: block;
  width: 28px;
  background: #b9cbe6;
  clip-path: polygon(0 0, 100% 0, 85% 100%, 15% 100%);
}

/* toolbox */

.toolbox {
  display: flex;
  flex-direction: column;
  width: 115px;
  border: solid #c6d0dc;
  border-width: 0 1px;
  background: #fbfcfe;
}

.toolbox .panel-title {
  padding-left: 2px;
}

.tool-tabs {
  display: flex;
  flex: none;
  height: 10px;
  margin: 2px 1px 2px;
  border-bottom: 1px solid #d4dae2;
}

.tool-tabs button {
  flex: 1 0 auto;
  border-right: 1px solid #d4dae2;
  background: #eef1f5;
}

.tool-tabs .active {
  background: #fff;
}

.toolbox h3 {
  flex: none;
  margin: 1px 2px 2px;
  padding-left: 1px;
  line-height: 8px;
  border-bottom: 1px solid #e1e5ea;
}

.row {
  display: grid;
  grid-template-columns: 26px auto;
  flex: none;
  column-gap: 4px;
  align-items: center;
  height: 10px;
}

.row.field {
  margin-bottom: 2px;
}

.row > :first-child {
  text-align: right;
  white-space: nowrap;
}

.row > input,
.select {
  width: 48px;
}

.select {
  position: relative;
}

.select::after {
  content: "";
  position: absolute;
  top: 2px;
  right: 4px;
  width: 4px;
  height: 4px;
  border: solid #444;
  border-width: 0 1px 1px 0;
  transform: rotate(45deg);
}

select {
  display: block;
  appearance: none;
  width: 100%;
  height: 10px;
  padding-left: 2px;
  border: 1px solid #9ea3aa;
  background: #fff;
}

.radios {
  display: grid;
  grid-template-columns: 32px auto;
}

.radios label,
.check {
  display: flex;
  align-items: center;
  gap: 3px;
  white-space: nowrap;
}

.row .radios {
  padding-left: 2px;
}

.buttons {
  display: grid;
  grid-template-columns: repeat(auto-fill, 17px);
  gap: 3px;
  flex: none;
}

.buttons button {
  display: flex;
  height: 17px;
  padding: 1px;
  border: 1px solid #9fb0c2;
  border-radius: 2px;
  background: #f6fafd;
}

.buttons svg {
  width: 100%;
  height: 100%;
  fill: none;
  stroke: #465f72;
}

.buttons.big {
  grid-template-columns: 22px 22px;
  gap: 4px;
  padding: 2px 0 4px 34px;
}

.big .letter {
  align-items: center;
  justify-content: center;
  color: #4a93ae;
  font-size: 12px;
}

.row.symbols {
  height: auto;
  margin-bottom: 3px;
}

.symbols > span {
  align-self: start;
  line-height: 17px;
}

.modes {
  flex: none;
  grid-template-columns: 40px auto;
  padding-left: 21px;
  margin-bottom: 1px;
}

.row.dims {
  grid-template-columns: 24px 40px auto;
  margin-bottom: 2px;
}

.dims > input {
  width: 40px;
}

.dims .check {
  gap: 1px;
}

.buttons.sizes {
  padding-left: 20px;
}

.buttons.edit {
  padding-left: 30px;
}

.show {
  padding: 2px 0 0 37px;
}

.show input:checked {
  background: #555;
}

/* status bar */

.status {
  display: flex;
  align-items: center;
  flex: none;
  height: 11px;
  padding: 0 1px;
  background: #edf0f4;
}

.hint {
  flex: 1;
}

.version {
  width: 60px;
}

.progress {
  width: 24px;
  height: 8px;
  margin-right: 43px;
  background: #bd5b0b;
}

.unit {
  width: 16px;
  border: 1px solid #c5cad1;
  background: #fff;
  text-align: center;
}

.status label {
  display: flex;
  align-items: center;
  gap: 2px;
  padding-left: 4px;
}

.status input {
  width: 31px;
}
```
